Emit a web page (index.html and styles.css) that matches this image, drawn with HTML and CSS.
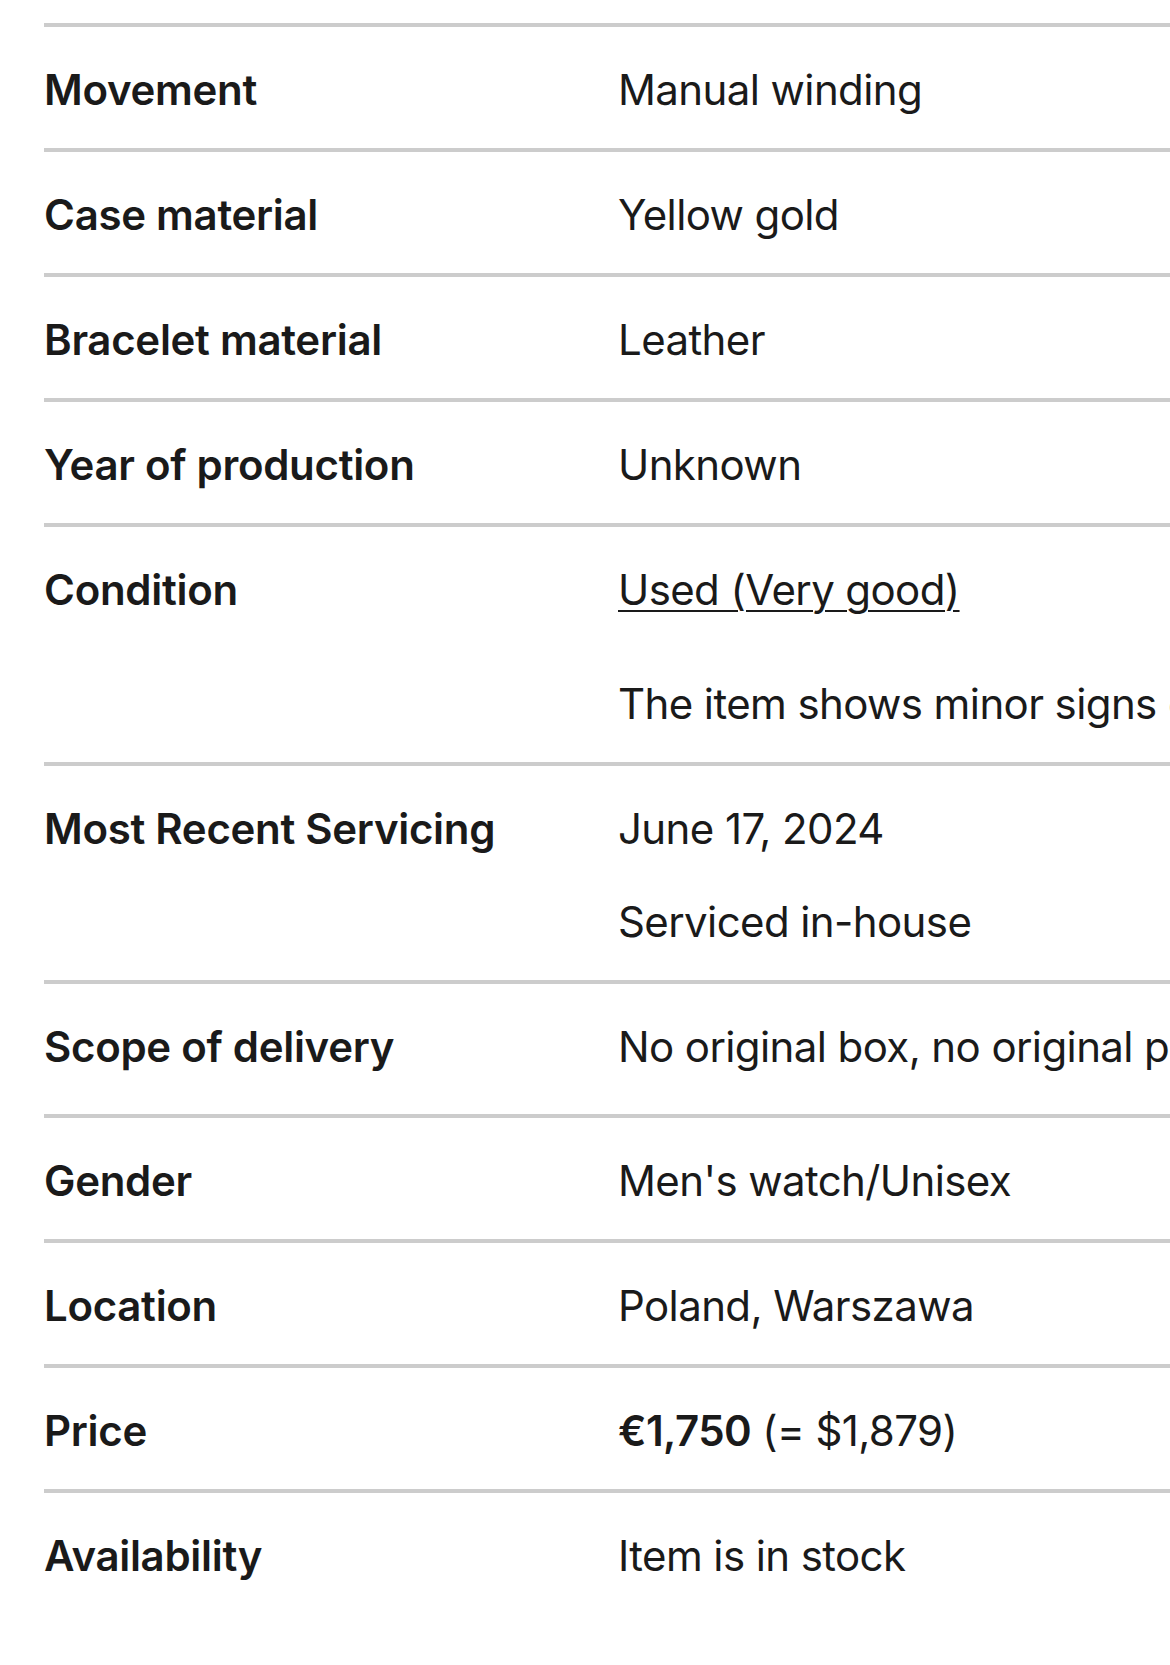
FILE: index.html
```html
<!DOCTYPE html>
<html lang="en">
<head>
<meta charset="utf-8">
<title>Watch details</title>
<link rel="stylesheet" href="styles.css">
</head>
<body>
<div class="specs">
  <div class="row">
    <div class="label">Movement</div>
    <div class="value">Manual winding</div>
  </div>
  <div class="row">
    <div class="label">Case material</div>
    <div class="value">Yellow gold</div>
  </div>
  <div class="row">
    <div class="label">Bracelet material</div>
    <div class="value">Leather</div>
  </div>
  <div class="row">
    <div class="label">Year of production</div>
    <div class="value">Unknown</div>
  </div>
  <div class="row">
    <div class="label">Condition</div>
    <div class="value">
      <a class="link" href="#">Used (Very good)</a>
      <p class="note note-wide">The item shows minor signs of wear, such as small scratches</p>
    </div>
  </div>
  <div class="row">
    <div class="label">Most Recent Servicing</div>
    <div class="value">
      <div>June 17, 2024</div>
      <p class="note">Serviced in-house</p>
    </div>
  </div>
  <div class="row row-tall">
    <div class="label">Scope of delivery</div>
    <div class="value">No original box, no original papers</div>
  </div>
  <div class="row">
    <div class="label">Gender</div>
    <div class="value">Men's watch/Unisex</div>
  </div>
  <div class="row">
    <div class="label">Location</div>
    <div class="value">Poland, Warszawa</div>
  </div>
  <div class="row">
    <div class="label">Price</div>
    <div class="value"><strong class="price">€1,750</strong> (= $1,879)</div>
  </div>
  <div class="row">
    <div class="label">Availability</div>
    <div class="value">Item is in stock</div>
  </div>
</div>
</body>
</html>
```
FILE: styles.css
```css
html, body {
  margin: 0;
  padding: 0;
  background: #ffffff;
  overflow: hidden;
}

body {
  font-family: Inter, "Noto Sans", "Liberation Sans", sans-serif;
  color: #1a1a1a;
  font-size: 42px;
  line-height: 58px;
}

.specs {
  width: 1600px;
  padding: 23px 0 0 44px;
}

.row {
  display: grid;
  grid-template-columns: 574px 1fr;
  border-top: 4px solid #cccccc;
  padding: 34px 0 29px;
}

.row-tall {
  padding-bottom: 38px;
}

.label {
  font-weight: 600;
  letter-spacing: -0.3px;
  white-space: nowrap;
}

.value {
  font-weight: 400;
  letter-spacing: -0.6px;
  white-space: nowrap;
}

.link {
  color: inherit;
  text-decoration: underline;
  text-decoration-thickness: 2px;
  text-underline-offset: 5px;
}

.note {
  margin: 35px 0 0;
}

.note-wide {
  margin-top: 56px;
}

.price {
  font-weight: 600;
}
```
